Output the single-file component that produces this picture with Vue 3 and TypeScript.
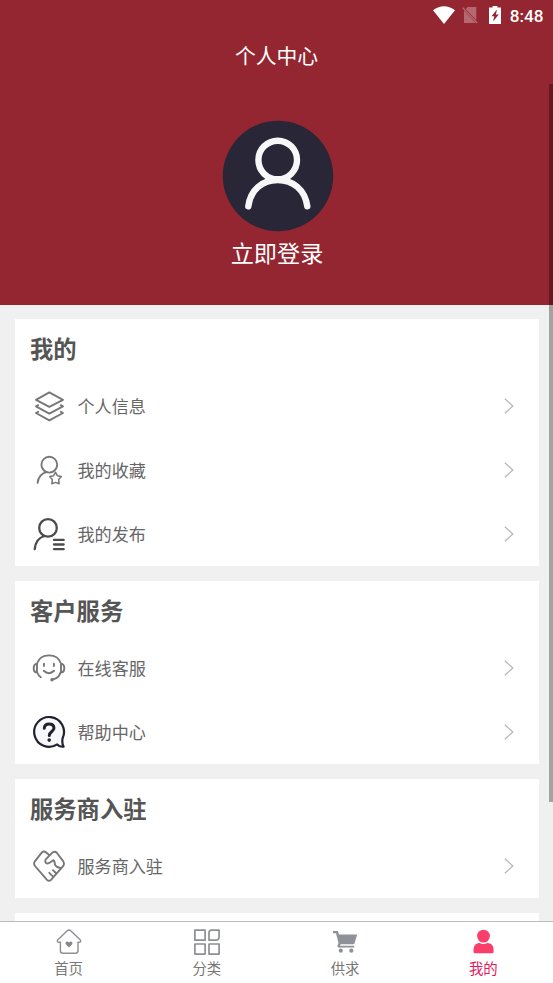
<script setup lang="ts">
interface Row { icon: string; label: string }
interface Section { title: string; rows: Row[] }

const sections: Section[] = [
  {
    title: '我的',
    rows: [
      { icon: 'layers', label: '个人信息' },
      { icon: 'favorite', label: '我的收藏' },
      { icon: 'publish', label: '我的发布' },
    ],
  },
  {
    title: '客户服务',
    rows: [
      { icon: 'service', label: '在线客服' },
      { icon: 'help', label: '帮助中心' },
    ],
  },
  { title: '服务商入驻', rows: [{ icon: 'handshake', label: '服务商入驻' }] },
]

const tabs = [
  { icon: 'home', label: '首页', active: false },
  { icon: 'grid', label: '分类', active: false },
  { icon: 'cart', label: '供求', active: false },
  { icon: 'user', label: '我的', active: true },
]
</script>

<template>
  <div class="page">
    <header class="hero">
      <div class="status">
        <svg class="wifi" viewBox="0 0 22 18"><path d="M0 4.2Q11-3.6 22 4.2L11 18Z" fill="#fff" /></svg>
        <svg class="sim" viewBox="0 0 16 18">
          <path d="M5.4 1H14.3V14.2L3.9 3.2ZM2 4.6L13.8 17H2Z" fill="#b5686f" />
          <path d="M.8 1.8L15.2 17" stroke="#b5686f" stroke-width="1.3" />
        </svg>
        <svg class="battery" viewBox="0 0 12 18">
          <path d="M3.6 0h4.8v1.6H12V18H0V1.6h3.6Z" fill="#fff" />
          <path d="M8 3.6L2.5 10.2h2.8L4 15.6 9.8 8.6H6.9Z" fill="#932630" />
        </svg>
        <span class="clock">8:48</span>
      </div>
      <h1>个人中心</h1>
      <svg class="avatar" viewBox="0 0 112 112">
        <circle cx="56" cy="56" r="55.2" fill="#282637" />
        <g fill="none" stroke="#f7f7f8" stroke-width="6.4" stroke-linecap="round">
          <circle cx="55.7" cy="40" r="19.3" />
          <path d="M26.3 86.3C28.5 69.5 40.5 60 55.7 60S83 69.5 85.3 86.3" />
        </g>
      </svg>
      <div class="login">立即登录</div>
    </header>

    <main class="content">
      <section v-for="s in sections" :key="s.title" class="card">
        <h2>{{ s.title }}</h2>
        <div v-for="r in s.rows" :key="r.label" class="row">
          <svg class="row-icon" viewBox="0 0 34 34" fill="none" stroke="#777" stroke-width="1.9" stroke-linecap="round" stroke-linejoin="round">
            <template v-if="r.icon === 'layers'">
              <path d="M17.3 3.4L31 10.8 17.3 17.8 4 10.8Z" />
              <path d="M6.2 16.2L4 17.4 17.3 24.6 31 17.4 28.8 16.2M6.2 22.8L4 24 17.3 31.3 31 24 28.8 22.8" />
            </template>
            <template v-else-if="r.icon === 'favorite'">
              <circle cx="17.3" cy="11.7" r="7.9" />
              <path d="M5.6 29.8C6.3 24.2 9.6 20.5 14.5 19.2" />
              <path d="M23.5 19.4l1.9 3.3 3.9.8-2.6 3.1.4 4.1-3.6-1.3-3.6 1.3.4-4.1-2.6-3.1 3.9-.8Z" stroke-width="1.5" />
            </template>
            <g v-else-if="r.icon === 'publish'" stroke="#4a4c4d" stroke-width="2.3">
              <circle cx="16" cy="10.9" r="8.8" />
              <path d="M2.7 32.2C3.3 25.5 7.2 20.5 12.5 19" />
              <path d="M22 22.9h9.7M22 27.5h9.7M22 32.2h9.7" />
            </g>
            <template v-else-if="r.icon === 'service'">
              <path d="M5 12.5C6.8 7.4 11.2 4.4 17 4.4S27.3 7.4 29 12.5M5 13v8.4H3.7Q1.7 20.5 1.7 17.2T3.7 13ZM29 13v8.4h1.3q2-.9 2-4.2T30.3 13ZM28.6 21.4Q26.5 27.8 20.7 28.3M5.2 21.5q1.2 3 3.6 4.8M12 12.7v2.4M21.9 12.7v2.4M11.7 19.8q5.1 4.7 10.4 0" />
              <circle cx="20" cy="28.7" r="1.7" fill="#777" stroke="none" />
            </template>
            <g v-else-if="r.icon === 'help'" stroke="#202130" stroke-width="2.2">
              <path d="M30.6 23.2A14.9 14.9 0 1 0 25.2 29.4Q28 32.3 31.6 31.6 29.7 28.5 30.6 23.2" fill="#f8f8fb" />
              <path d="M12.3 13.2q.2-4.2 4.8-4.2t4.9 4.1c0 3.5-4.7 3.4-4.7 7.5" stroke-width="3" />
              <circle cx="17.2" cy="25.1" r="1.8" fill="#202130" stroke="none" />
            </g>
            <template v-else>
              <path d="M17.2 6L14.2 3.5Q12 1.7 9.9 3.4L2.8 12.4Q1.3 14.8 3 17L15 30.9Q17 32.8 19 30.9L31.1 17.2Q32.7 15 31.3 12.4L24.8 3.7Q22.8 1.8 20.6 3.4L14.2 9.8Q12.4 12.2 14 14 15.9 15.2 18 13.6L21.2 11.2Q22.8 12 22.9 15.5 24.4 18.6 28.8 18.9M21 21.2l2.8 2.8M17.3 23.8l3 3" />
            </template>
          </svg>
          <span class="label">{{ r.label }}</span>
          <svg class="chevron" viewBox="0 0 10 16"><path d="M.8.8L8.8 8 .8 15.2" fill="none" stroke="#b8b8b8" stroke-width="1.3" /></svg>
        </div>
      </section>
      <section class="card card-next"></section>
    </main>

    <nav class="tabs">
      <div v-for="t in tabs" :key="t.icon" class="tab" :class="{ active: t.active }">
        <svg class="tab-icon" viewBox="0 0 28 28" fill="none" stroke="#8d8f94" stroke-width="1.4" stroke-linejoin="round">
          <template v-if="t.icon === 'home'">
            <path d="M12.3 2.7Q14 1.3 15.7 2.7L25.4 12Q26.5 14.2 24 14.2H23V22.8Q23 25.3 20.5 25.3H8Q5.4 25.3 5.4 22.8V14.2H4Q1.5 14.2 2.6 12Z" />
            <path d="M14 19.5L10.8 16.3Q9.9 14.7 11.2 13.7 12.8 12.9 14 14.5 15.2 12.9 16.8 13.7 18.1 14.7 17.2 16.3Z" fill="#85878b" stroke="none" />
          </template>
          <path v-else-if="t.icon === 'grid'" d="M1.9 2.1H12.1V12.2H1.9ZM1.9 16H12.1V26.1H1.9ZM16 16H26.1V26.1H16ZM18.6 2.1H26.1V8.8Q26.1 12.2 22.7 12.2H16V4.8Q16 2.1 18.6 2.1Z" stroke-width="1.7" />
          <g v-else-if="t.icon === 'cart'" fill="#8f9198" stroke="none">
            <path d="M2 3h4.9l1.1 3.4h18.2l-3 9.9H9.6l-.6 1.5h14.2v1.8H7l-.6-1.5 1.1-3L5 5.2H2Z" />
            <circle cx="9.8" cy="22.7" r="2.1" /><circle cx="20.3" cy="22.7" r="2.1" />
          </g>
          <g v-else fill="#f93e6c" stroke="none">
            <circle cx="14.5" cy="8.1" r="6.4" />
            <path d="M4.5 23.8V21.6Q4.8 15.3 10.5 15Q14.5 16.8 18.5 15 24.3 15.3 24.6 21.6V23.8Q24.6 25.3 23.1 25.3H6Q4.5 25.3 4.5 23.8Z" />
          </g>
        </svg>
        <span>{{ t.label }}</span>
      </div>
    </nav>
    <div class="scrollbar"></div>
  </div>
</template>

<style>
body { margin: 0; }
</style>

<style scoped>
.page {
  position: relative;
  display: flex;
  flex-direction: column;
  height: 983px;
  overflow: hidden;
  background: #f0f0f0;
  color: #666;
  font-family: "Noto Sans CJK SC", sans-serif;
}
.hero {
  flex: none;
  display: flex;
  flex-direction: column;
  align-items: center;
  height: 304.5px;
  background: #932630;
  color: #fff;
}
.status {
  align-self: stretch;
  display: flex;
  align-items: center;
  justify-content: flex-end;
  height: 30px;
  padding-right: 9.5px;
}
.wifi { width: 22px; height: 18px; margin-right: 7px; }
.sim { width: 16px; height: 18px; margin-right: 11px; }
.battery { width: 12px; height: 18px; margin-right: 8.5px; }
.clock { font: 500 17.2px/30px Roboto, sans-serif; padding-top: 1px; }
h1 {
  margin: 9px 0 0;
  font-size: 20.8px;
  font-weight: 400;
  line-height: 32px;
}
.avatar { width: 112px; height: 112px; margin: 49px 0 0 2px; }
.login { margin: 3px 0 0 1px; font-size: 23.2px; line-height: 34px; }
.content { flex: 1; min-height: 0; overflow: hidden; padding: 14.5px 14px 0 15px; }
.card { margin-bottom: 15px; background: #fff; }
.card-next { height: 60px; }
h2 {
  margin: 0;
  height: 55px;
  padding-left: 15px;
  color: #555;
  font-size: 23.3px;
  font-weight: 700;
  line-height: 59px;
}
.row { display: flex; align-items: center; height: 64px; padding: 0 25px 0 17px; }
.row-icon { width: 34px; height: 34px; margin-right: 12px; }
.label { flex: 1; margin: -1px 0 1px -0.5px; font-size: 17.1px; line-height: 27px; }
.chevron { width: 10px; height: 16px; }
.tabs {
  flex: none;
  display: flex;
  height: 61px;
  border-top: 1px solid #bbb;
  background: #fff;
}
.tab {
  flex: 1;
  display: flex;
  flex-direction: column;
  align-items: center;
  padding: 6px 1px 0 0;
  color: #777;
  font-size: 14.4px;
  line-height: 24px;
}
.tab-icon { width: 28px; height: 28px; }
.active { color: #df1b62; }
.scrollbar {
  position: absolute;
  top: 84px;
  right: 0;
  width: 4px;
  height: 718px;
  background: rgba(0, 0, 0, 0.32);
}
</style>
